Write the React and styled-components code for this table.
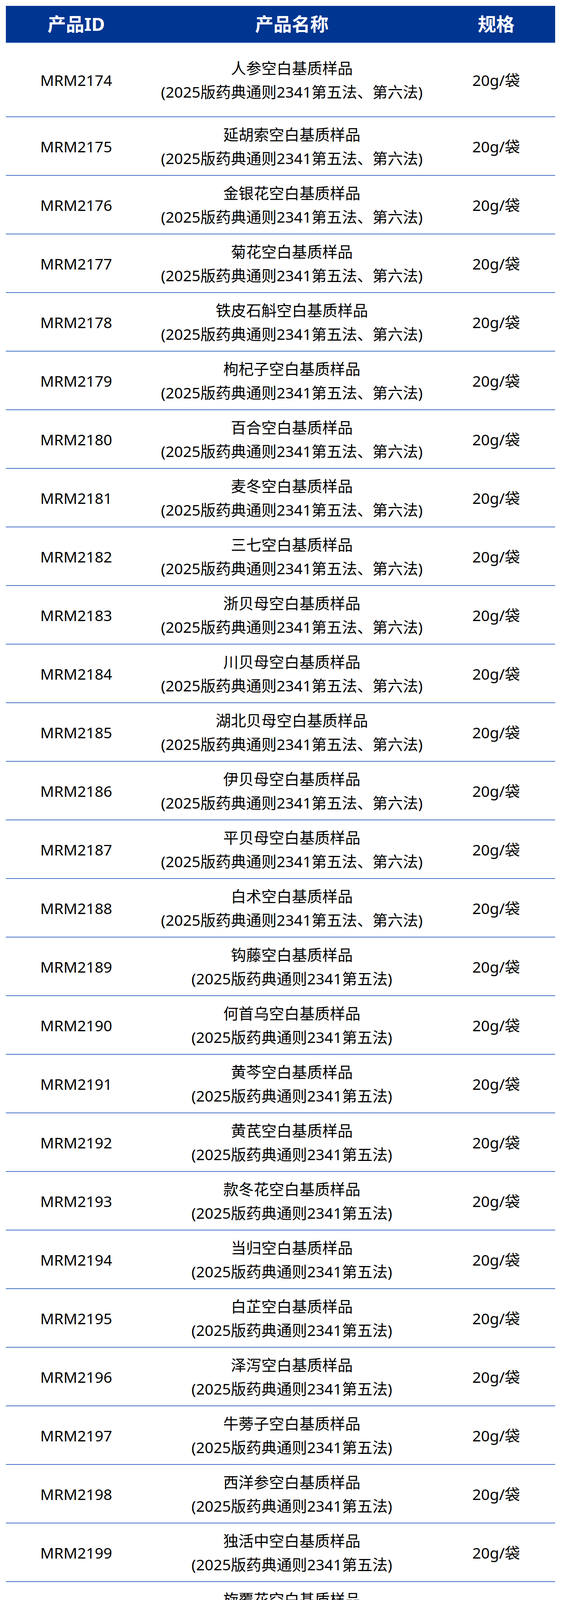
import styled, { createGlobalStyle } from "styled-components";

const GlobalStyle = createGlobalStyle`
  html, body {
    margin: 0;
    padding: 0;
    background: #ffffff;
  }
  body {
    font-family: "Noto Sans", "Noto Sans CJK SC", sans-serif;
  }
`;

const FULL = "(2025版药典通则2341第五法、第六法)";
const FIFTH = "(2025版药典通则2341第五法)";

// [id suffix, herb name, uses both methods]
const products = [
  ["2174", "人参", true],
  ["2175", "延胡索", true],
  ["2176", "金银花", true],
  ["2177", "菊花", true],
  ["2178", "铁皮石斛", true],
  ["2179", "枸杞子", true],
  ["2180", "百合", true],
  ["2181", "麦冬", true],
  ["2182", "三七", true],
  ["2183", "浙贝母", true],
  ["2184", "川贝母", true],
  ["2185", "湖北贝母", true],
  ["2186", "伊贝母", true],
  ["2187", "平贝母", true],
  ["2188", "白术", true],
  ["2189", "钩藤", false],
  ["2190", "何首乌", false],
  ["2191", "黄芩", false],
  ["2192", "黄芪", false],
  ["2193", "款冬花", false],
  ["2194", "当归", false],
  ["2195", "白芷", false],
  ["2196", "泽泻", false],
  ["2197", "牛蒡子", false],
  ["2198", "西洋参", false],
  ["2199", "独活中", false],
  ["2200", "旋覆花", false],
  ["2201", "玄参", false],
  ["2202", "丁香", false],
  ["2203", "莪术", false],
  ["2204", "川楝子", false],
  ["2205", "茯神木", false],
  ["2206", "灵芝中", false],
  ["2207", "甘草中", false],
  ["2208", "鸡血藤", false],
  ["2209", "山药中", false],
  ["2210", "诃子中", false],
  ["2211", "知母", false],
  ["2212", "远志", false],
  ["2213", "益母草", false],
  ["2214", "续断", false],
  ["2215", "蒲公英", false],
  ["2216", "猫爪草", false],
  ["2217", "狗脊", false],
  ["2218", "党参", false],
  ["2219", "川牛膝", false],
  ["2220", "石斛", false],
  ["2221", "猪苓", false],
  ["2222", "白芍", false],
  ["2223", "丹参片", false],
  ["2224", "陈皮", false],
  ["2225", "苍术", false],
];

const Table = styled.div`
  width: 1406px;
  margin: 15px auto 14px;
  border-bottom: 2px solid #4472c4;
`;

const columns = "360px 744px 302px";

const HeaderRow = styled.div`
  display: grid;
  grid-template-columns: ${columns};
  height: 95px;
  box-sizing: border-box;
  background: #003591;
  border-bottom: 2px solid #4472c4;
`;

const HeaderCell = styled.div`
  display: flex;
  align-items: center;
  justify-content: center;
  color: #ffffff;
  font-size: 47px;
  font-weight: 700;
  line-height: 1;
`;

const Row = styled.div`
  display: grid;
  grid-template-columns: ${columns};
  height: ${(p) => (p.$tall ? 190 : 150)}px;
  box-sizing: border-box;
  border-bottom: 2px solid #4472c4;
  background: #ffffff;
`;

const Cell = styled.div`
  display: flex;
  flex-direction: column;
  align-items: center;
  justify-content: center;
  text-align: center;
  color: #000000;
  font-size: 39px;
  line-height: 61px;
  white-space: nowrap;
`;

const Line = styled.span`
  display: block;
`;

export default function App() {
  return (
    <>
      <GlobalStyle />
      <Table>
        <HeaderRow>
          <HeaderCell>产品ID</HeaderCell>
          <HeaderCell>产品名称</HeaderCell>
          <HeaderCell>规格</HeaderCell>
        </HeaderRow>
        {products.map(([id, herb, both], i) => (
          <Row key={id} $tall={i === 0}>
            <Cell>MRM{id}</Cell>
            <Cell>
              <Line>{herb}空白基质样品</Line>
              <Line>{both ? FULL : FIFTH}</Line>
            </Cell>
            <Cell>20g/袋</Cell>
          </Row>
        ))}
      </Table>
    </>
  );
}
